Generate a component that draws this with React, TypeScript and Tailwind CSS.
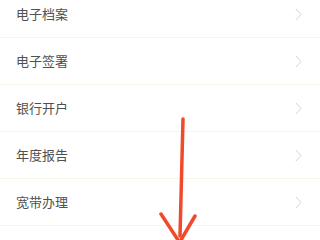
import React from 'react';

const items = ['电子档案', '电子签署', '银行开户', '年度报告', '宽带办理'];

function Chevron() {
  return (
    <svg width="7" height="13" viewBox="0 0 7 13" fill="none">
      <path d="M1 1 L6 6.5 L1 12" stroke="#d4d4d4" strokeWidth="1" strokeLinecap="round" strokeLinejoin="round" />
    </svg>
  );
}

export default function App() {
  return (
    <div className="relative w-[320px] h-[240px] overflow-hidden bg-white" style={{ fontFamily: '"Noto Sans CJK SC", "Noto Sans", sans-serif' }}>
      {/* List */}
      <div className="-mt-[9px]">
        {items.map((label) => (
          <div key={label} className="flex items-center justify-between h-[47px] pl-4 pr-[18px] border-b border-[#f7f5ea]">
            <span className="text-[13px] text-[#505050]">{label}</span>
            <Chevron />
          </div>
        ))}
      </div>

      {/* Hand-drawn arrow */}
      <svg className="absolute inset-0 pointer-events-none" width="320" height="240" viewBox="0 0 320 240" fill="none">
        <path d="M183 119 C182.5 150 181 195 180 236" stroke="#f1492b" strokeWidth="3.5" strokeLinecap="round" />
        <path d="M161 214 L178 240" stroke="#f1492b" strokeWidth="3.5" strokeLinecap="round" />
        <path d="M195 216 L181 240" stroke="#f1492b" strokeWidth="3.5" strokeLinecap="round" />
      </svg>
    </div>
  );
}
